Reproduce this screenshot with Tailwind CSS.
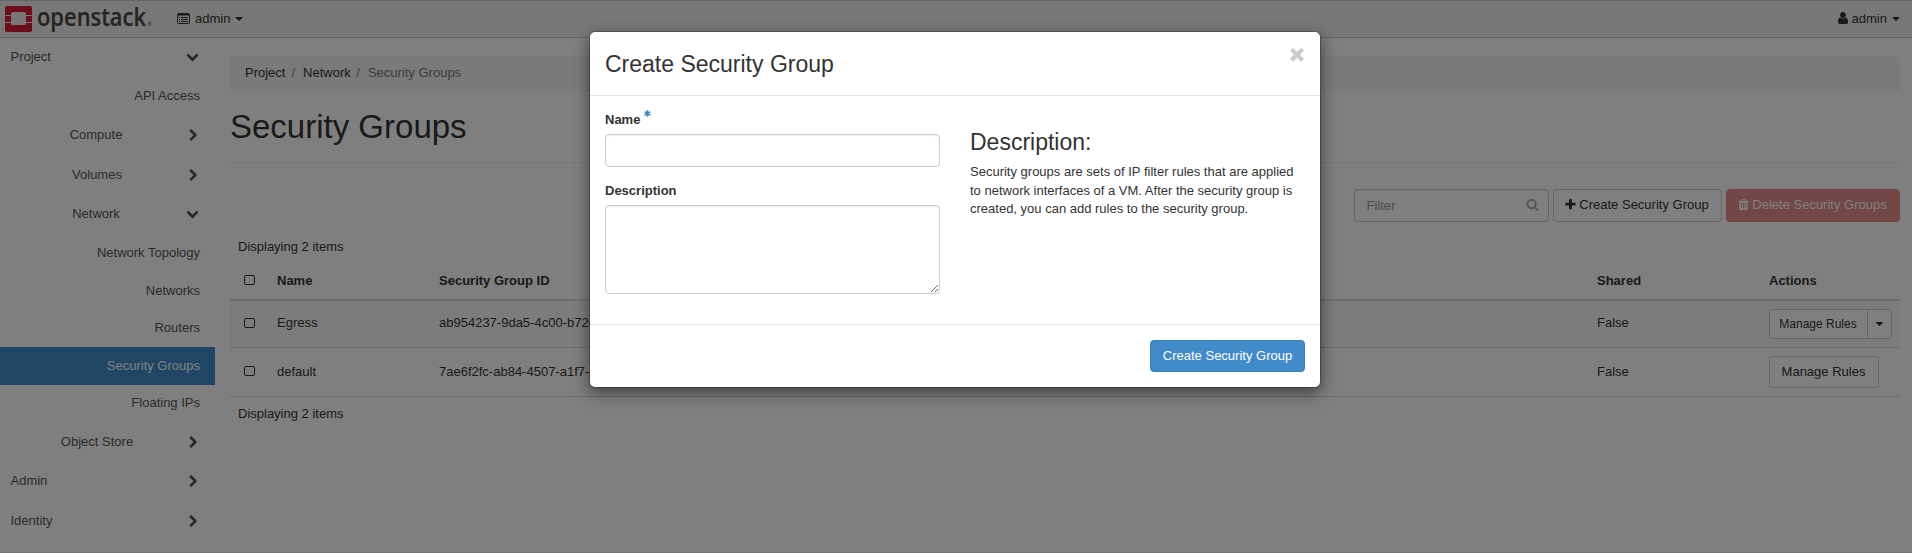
<!DOCTYPE html>
<html lang="en">
<head>
<meta charset="utf-8">
<title>Security Groups - OpenStack Dashboard</title>
<script src="https://cdn.jsdelivr.net/npm/@tailwindcss/browser@4"></script>
</head>
<body class="relative h-[553px] overflow-hidden bg-white font-['Liberation_Sans',Arial,sans-serif] text-[13px] leading-[18.57px] text-[#333]">
<svg class="hidden">
  <symbol id="right" viewBox="0 0 1792 1792"><path d="M1363 877l-742 742q-19 19-45 19t-45-19l-166-166q-19-19-19-45t19-45l531-531-531-531q-19-19-19-45t19-45l166-166q19-19 45-19t45 19l742 742q19 19 19 45t-19 45z"/></symbol>
  <symbol id="down" viewBox="0 0 1792 1792"><path d="M1683 808l-742 741q-19 19-45 19t-45-19l-742-741q-19-19-19-45.500t19-45.500l166-165q19-19 45-19t45 19l531 531 531-531q19-19 45-19t45 19l166 165q19 19 19 45.500t-19 45.500z"/></symbol>
  <symbol id="caret" viewBox="384 640 1024 576"><path d="M1408 704q0 26-19 45l-448 448q-19 19-45 19t-45-19l-448-448q-19-19-19-45t19-45 45-19h896q26 0 45 19t19 45z"/></symbol>
</svg>

<div class="flex h-full flex-col border-b border-[#e7e7e7]">
  <header class="flex h-[38px] shrink-0 items-center border-y border-[#ccc] bg-[#f0f0f0] pl-[5px] pr-3">
    <svg class="h-[26px] w-[150px] overflow-visible" viewBox="0 0 150 26">
      <path fill="#da1a32" d="M2 0h23a2 2 0 0 1 2 2v7h-6V8a2 2 0 0 0-2-2H8a2 2 0 0 0-2 2v1H0V2a2 2 0 0 1 2-2zM0 10h6v6H0zM21 10h6v6h-6zM0 17h6v.5a1.500 1.500 0 0 0 1.500 1.500h12a1.500 1.500 0 0 0 1.500-1.500v-.5h6v7a2 2 0 0 1-2 2H2a2 2 0 0 1-2-2z"/>
      <text x="32" y="20" font-family="Open Sans" font-size="25" font-weight="600" fill="#4d4742" stroke="#4d4742" stroke-width=".2" textLength="109" lengthAdjust="spacingAndGlyphs">openstack</text>
      <text x="142.500" y="20" font-family="Open Sans" font-size="5" fill="#4d4742">®</text>
    </svg>
    <div class="ml-[22px] flex items-center">
      <svg class="-mt-px h-[11px] w-[13px]" viewBox="0 0 13 11" fill="none" stroke="#333"><rect x=".5" y=".5" width="12" height="10" rx="1"/><path d="M1 1.500h11" stroke-width="2"/><path d="M2 4.500h1.200M4 4.500h7M2 6.500h1.200M4 6.500h7M2 8.500h1.200M4 8.500h7"/></svg>
      <span class="ml-[5px]">admin</span>
      <svg class="ml-[5px] h-[4px] w-[8px]" fill="#333"><use href="#caret"/></svg>
    </div>
    <div class="ml-auto flex items-center">
      <svg class="-mt-[2px] h-[14px] w-[14px]" viewBox="0 0 1792 1792" fill="#333"><path d="M1536 1399q0 109-62.500 187t-150.500 78h-854q-88 0-150.500-78t-62.500-187q0-85 8.500-160.500t31.500-152 58.500-131 94-89 134.500-34.500q131 128 313 128t313-128q76 0 134.500 34.500t94 89 58.500 131 31.500 152 8.500 160.500zm-256-887q0 159-112.500 271.500t-271.500 112.500-271.500-112.500-112.500-271.500 112.500-271.500 271.500-112.500 271.500 112.500 112.500 271.500z"/></svg>
      <span class="ml-[2px]">admin</span>
      <svg class="ml-[5px] h-[4px] w-[8px]" fill="#333"><use href="#caret"/></svg>
    </div>
  </header>

  <div class="flex min-h-0 flex-1">
    <nav class="w-[215px] shrink-0 text-[#555]">
      <div class="flex h-[38px] items-center justify-between pl-[10.500px] pr-4">Project<svg class="-mt-px size-[13px]" fill="#4c4c4c"><use href="#down"/></svg></div>
      <div class="flex h-[39px] items-center justify-end pr-[15px] pt-[2px]">API Access</div>
      <div class="flex h-10 items-center pr-[15px]"><span class="ml-[14px] w-[164px] text-center">Compute</span><svg class="ml-auto size-[13px]" fill="#4c4c4c"><use href="#right"/></svg></div>
      <div class="flex h-10 items-center pr-[15px]"><span class="ml-[15px] w-[164px] text-center">Volumes</span><svg class="ml-auto size-[13px]" fill="#4c4c4c"><use href="#right"/></svg></div>
      <div class="flex h-[38px] items-center pr-4"><span class="ml-[14px] w-[164px] text-center">Network</span><svg class="-mt-px ml-auto size-[13px]" fill="#4c4c4c"><use href="#down"/></svg></div>
      <div class="flex h-[39px] items-center justify-end pr-[15px] pt-[2px]">Network Topology</div>
      <div class="flex h-[38px] items-center justify-end pr-[15px]">Networks</div>
      <div class="flex h-[37px] items-center justify-end pr-[15px]">Routers</div>
      <div class="flex h-[38px] items-center justify-end bg-[#428bca] pr-[15px] text-white">Security Groups</div>
      <div class="flex h-[37px] items-center justify-end pr-[15px]">Floating IPs</div>
      <div class="flex h-10 items-center pr-[15px]"><span class="ml-[15px] w-[164px] text-center">Object Store</span><svg class="ml-auto size-[13px]" fill="#4c4c4c"><use href="#right"/></svg></div>
      <div class="flex h-[39px] items-center justify-between pl-[10.500px] pr-[15px]">Admin<svg class="size-[13px]" fill="#4c4c4c"><use href="#right"/></svg></div>
      <div class="flex h-10 items-center justify-between pl-[10.500px] pr-[15px]">Identity<svg class="size-[13px]" fill="#4c4c4c"><use href="#right"/></svg></div>
    </nav>

    <main class="flex-1 pl-[15px] pr-3 pt-[18px]">
      <div class="flex h-[35px] items-center rounded bg-[#f5f5f5] px-[15px]">
        <span>Project</span><span class="pl-[6px] pr-[8px] text-[#777]">/</span><span>Network</span><span class="pl-[5.500px] pr-[8px] text-[#777]">/</span><span class="text-[#777]">Security Groups</span>
      </div>
      <h1 class="flex h-[72px] items-center border-b border-[#eee] pb-2 pt-2 text-[33px] leading-9">Security Groups</h1>
      <div class="mt-[26px] flex h-[33px] justify-end gap-1">
        <div class="flex w-[195px] items-center justify-between rounded border border-[#ccc] pl-[11.500px] pr-[9px] text-[#999] shadow-[inset_0_1px_1px_rgba(0,0,0,0.075)]"><span class="pt-[2px]">Filter</span>
          <svg class="-mt-[2px] size-[13px]" viewBox="0 0 1792 1792" fill="#aaa"><path d="M1216 832q0-185-131.500-316.500t-316.500-131.500-316.500 131.500-131.500 316.500 131.500 316.500 316.500 131.500 316.500-131.500 131.500-316.500zm512 832q0 52-38 90t-90 38q-54 0-90-38l-343-342q-179 124-399 124-143 0-273.500-55.500t-225-150-150-225-55.500-273.500 55.500-273.500 150-225 225-150 273.500-55.500 273.500 55.500 225 150 150 225 55.500 273.500q0 220-124 399l343 343q37 37 37 90z"/></svg>
        </div>
        <div class="flex w-[169px] items-center justify-center rounded border border-[#ccc] pb-px pr-px">
          <svg class="-ml-px -mt-px mr-[2px] size-[13px]" viewBox="0 0 1792 1792" fill="#333"><path d="M1600 736v192q0 40-28 68t-68 28h-416v416q0 40-28 68t-68 28h-192q-40 0-68-28t-28-68v-416h-416q-40 0-68-28t-28-68v-192q0-40 28-68t68-28h416v-416q0-40 28-68t68-28h192q40 0 68 28t28 68v416h416q40 0 68 28t28 68z"/></svg>
          Create Security Group
        </div>
        <div class="flex w-[174px] items-center justify-center rounded border border-[#e38582] bg-[#e48e8b] pb-px pr-px text-white">
          <svg class="-ml-px -mt-px mr-[2px] size-[13px]" viewBox="0 0 1792 1792" fill="#fff"><path d="M704 1376v-704q0-14-9-23t-23-9h-64q-14 0-23 9t-9 23v704q0 14 9 23t23 9h64q14 0 23-9t9-23zm256 0v-704q0-14-9-23t-23-9h-64q-14 0-23 9t-9 23v704q0 14 9 23t23 9h64q14 0 23-9t9-23zm256 0v-704q0-14-9-23t-23-9h-64q-14 0-23 9t-9 23v704q0 14 9 23t23 9h64q14 0 23-9t9-23zm-544-992h448l-48-117q-7-9-17-11h-317q-10 2-17 11zm928 32v64q0 14-9 23t-23 9h-96v948q0 83-47 143.500t-113 60.500h-832q-66 0-113-58.500t-47-141.500v-952h-96q-14 0-23-9t-9-23v-64q0-14 9-23t23-9h309l70-167q15-37 54-63t79-26h320q40 0 79 26t54 63l70 167h309q14 0 23 9t9 23z"/></svg>
          Delete Security Groups
        </div>
      </div>
      <div class="mt-4 pl-2">Displaying 2 items</div>
      <table class="mt-[6px] w-full table-fixed border-separate border-spacing-0 text-left">
        <colgroup><col class="w-[47px]"><col class="w-[162px]"><col class="w-[1158px]"><col class="w-[172px]"><col class="w-[131px]"></colgroup>
        <thead>
          <tr class="h-[38px] [&>th]:border-b-2 [&>th]:border-[#ddd] [&>th]:p-0">
            <th><div class="mb-px ml-[14px] h-[10px] w-[11px] rounded-[2px] border border-[#333]"></div></th><th><div class="pt-[2px]">Name</div></th><th><div class="pt-[2px]">Security Group ID</div></th><th><div class="pt-[2px]">Shared</div></th><th><div class="pt-[2px]">Actions</div></th>
          </tr>
        </thead>
        <tbody>
          <tr class="h-[47px] bg-[#f9f9f9] [&>td]:border-b [&>td]:border-[#ddd] [&>td]:p-0">
            <td><div class="mb-[2px] ml-[14px] h-[10px] w-[11px] rounded-[2px] border border-[#333]"></div></td><td>Egress</td><td>ab954237-9da5-4c00-b72c</td><td>False</td>
            <td><div class="flex h-[30px] w-[123px] rounded-[3px] border border-[#ccc] bg-white text-[12px]"><span class="flex flex-1 items-center justify-center border-r border-[#ccc] pr-px pt-px">Manage Rules</span><span class="flex w-[23px] items-center justify-center"><svg class="h-[4px] w-[7px]" fill="#333"><use href="#caret"/></svg></span></div></td>
          </tr>
          <tr class="h-[49px] [&>td]:border-b [&>td]:border-[#ddd] [&>td]:p-0">
            <td><div class="mb-px ml-[14px] h-[10px] w-[11px] rounded-[2px] border border-[#333]"></div></td><td><div class="pt-px">default</div></td><td><div class="pt-px">7ae6f2fc-ab84-4507-a1f7-c</div></td><td><div class="pt-px">False</div></td>
            <td><div class="flex h-8 w-[110px] items-center justify-center rounded border border-[#ccc] bg-white pr-px pt-px">Manage Rules</div></td>
          </tr>
        </tbody>
      </table>
      <div class="mt-2 pl-2">Displaying 2 items</div>
    </main>
  </div>
</div>

<div class="absolute inset-0 flex items-start justify-center bg-black/50 pr-[2px] pt-[31px]">
  <section class="w-[732px] rounded-md border border-black/20 bg-white bg-clip-padding shadow-[0_5px_15px_rgba(0,0,0,0.5)]">
    <div class="flex h-16 justify-between border-b border-[#e5e5e5] px-[15px]">
      <h2 class="pt-[18.500px] text-[23px] leading-[26px]">Create Security Group</h2>
      <svg class="-mr-[2px] mt-[12px] size-[20px]" viewBox="0 0 1792 1792" fill="#ccc"><path d="M1490 1322q0 40-28 68l-136 136q-28 28-68 28t-68-28l-294-294-294 294q-28 28-68 28t-68-28l-136-136q-28-28-28-68t28-68l294-294-294-294q-28-28-28-68t28-68l136-136q28-28 68-28t68 28l294 294 294-294q28-28 68-28t68 28l136 136q28 28 28 68t-28 68l-294 294 294 294q28 28 28 68z"/></svg>
    </div>
    <div class="flex h-[228px] gap-[30px] px-[15px]">
      <div class="w-[335px]">
        <div class="flex pt-[15px] font-bold"><span>Name</span><svg class="-mt-px ml-1 size-[7px]" viewBox="0 0 6 6" stroke="#428bca" stroke-width="1.500" stroke-linecap="round"><path d="M3 .8v4.400M1.100 1.900l3.800 2.200M4.900 1.900L1.100 4.100"/></svg></div>
        <input type="text" class="mt-[4.430px] block h-[33px] w-full rounded border border-[#ccc] shadow-[inset_0_1px_1px_rgba(0,0,0,0.075)]">
        <div class="mt-[15px] font-bold">Description</div>
        <textarea class="mt-[4.430px] block h-[89px] w-full resize rounded border border-[#ccc] shadow-[inset_0_1px_1px_rgba(0,0,0,0.075)]"></textarea>
      </div>
      <div class="w-[335px]">
        <h3 class="pt-[32.500px] text-[23px] leading-[26px]">Description:</h3>
        <p class="mt-[8.500px]">Security groups are sets of IP filter rules that are applied<br>to network interfaces of a VM. After the security group is<br>created, you can add rules to the security group.</p>
      </div>
    </div>
    <div class="flex h-[63px] justify-end border-t border-[#e5e5e5] px-[15px] pt-[15px]">
      <button class="h-8 w-[155px] rounded border border-[#357ebd] bg-[#428bca] text-white">Create Security Group</button>
    </div>
  </section>
</div>
</body>
</html>
